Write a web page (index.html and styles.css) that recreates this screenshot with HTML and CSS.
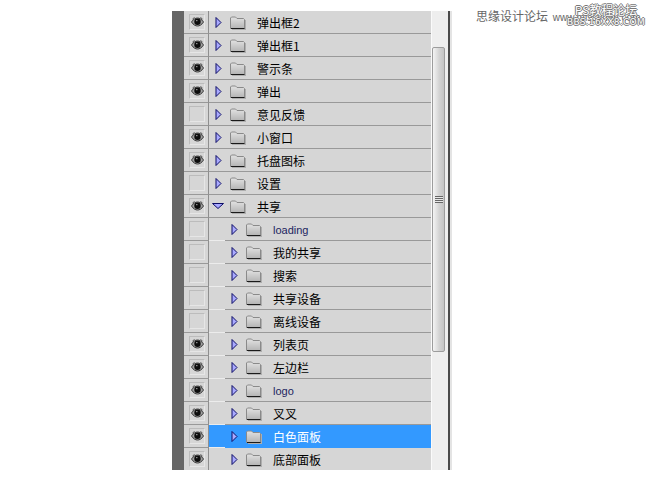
FILE: index.html
```html
<!DOCTYPE html>
<html>
    <head>
        <meta charset="utf-8">
        <title>图层面板</title>
        <link rel="stylesheet" href="styles.css">
    </head>
    <body>
        <svg class="defs" width="0" height="0">
            <defs>
                <linearGradient id="foldergrad" x1="0" y1="0" x2="0" y2="1">
                    <stop offset="0" stop-color="#e2e2e2"/>
                    <stop offset="1" stop-color="#b4b4b4"/>
                </linearGradient>
                <symbol id="eye" viewBox="0 0 13 10">
                    <path d="M.5 5 C2.500 2 4.500 1 6.500 1 C8.500 1 10.500 2 12.500 5 C10.500 8 8.500 9 6.500 9 C4.500 9 2.500 8 .5 5 Z" fill="#a2a2a2" stroke="#3a3a3a" stroke-width="1"/>
                    <circle cx="6.500" cy="4.800" r="3.200" fill="#0c0c0c"/>
                    <rect x="5" y="3" width="1.500" height="1.200" fill="#8c8c8c"/>
                    <path d="M1.500 2 L3.500 .5 M9.500 .5 L11.500 2" stroke="#4c4c4c" stroke-width="1"/>
                </symbol>
                <symbol id="arrow" viewBox="0 0 7 11">
                    <path d="M1 .5 L6 5.500 L1 10.500 Z" fill="#aaaaff" stroke="#0c0c66" stroke-width="1"/>
                </symbol>
                <symbol id="arrowdown" viewBox="0 0 12 6">
                    <path d="M.5 .5 L11.500 .5 L6 5.500 Z" fill="#aaaaff" stroke="#0c0c66" stroke-width="1"/>
                </symbol>
                <symbol id="folder" viewBox="0 0 16 14">
                    <path d="M15 4 H16 V14 H2 V13 H15 Z" fill="#aeaeae"/>
                    <path d="M.5 12.500 V2 L1.500 1 H5.500 L7 2.500 H13.500 L14.500 3.500 V12.500 Z" fill="url(#foldergrad)" stroke="#8a8a8a" stroke-width="1"/>
                    <path d="M1 12.500 H14.500" stroke="#1a1a1a" stroke-width="1"/>
                </symbol>
            </defs>
        </svg>

        <div class="watermark">
            <span class="wm-site">思缘设计论坛 <span class="wm-url">www.missyuan.com</span></span>
            <div class="wm-stamp">
                <span>PS教程论坛</span>
                <span class="wm-bbs">BBS.16XX8.COM</span>
            </div>
        </div>

        <div class="panel">
            <div class="strip"></div>
            <div class="layers">
                <div class="row">
                    <div class="eye"><span class="box"><svg class="i-eye"><use href="#eye"/></svg></span></div>
                    <div class="cell"><svg class="i-arrow"><use href="#arrow"/></svg><svg class="i-folder"><use href="#folder"/></svg><span class="name">弹出框2</span></div>
                </div>
                <div class="row">
                    <div class="eye"><span class="box"><svg class="i-eye"><use href="#eye"/></svg></span></div>
                    <div class="cell"><svg class="i-arrow"><use href="#arrow"/></svg><svg class="i-folder"><use href="#folder"/></svg><span class="name">弹出框1</span></div>
                </div>
                <div class="row">
                    <div class="eye"><span class="box"><svg class="i-eye"><use href="#eye"/></svg></span></div>
                    <div class="cell"><svg class="i-arrow"><use href="#arrow"/></svg><svg class="i-folder"><use href="#folder"/></svg><span class="name">警示条</span></div>
                </div>
                <div class="row">
                    <div class="eye"><span class="box"><svg class="i-eye"><use href="#eye"/></svg></span></div>
                    <div class="cell"><svg class="i-arrow"><use href="#arrow"/></svg><svg class="i-folder"><use href="#folder"/></svg><span class="name">弹出</span></div>
                </div>
                <div class="row">
                    <div class="eye"><span class="box"></span></div>
                    <div class="cell"><svg class="i-arrow"><use href="#arrow"/></svg><svg class="i-folder"><use href="#folder"/></svg><span class="name">意见反馈</span></div>
                </div>
                <div class="row">
                    <div class="eye"><span class="box"><svg class="i-eye"><use href="#eye"/></svg></span></div>
                    <div class="cell"><svg class="i-arrow"><use href="#arrow"/></svg><svg class="i-folder"><use href="#folder"/></svg><span class="name">小窗口</span></div>
                </div>
                <div class="row">
                    <div class="eye"><span class="box"><svg class="i-eye"><use href="#eye"/></svg></span></div>
                    <div class="cell"><svg class="i-arrow"><use href="#arrow"/></svg><svg class="i-folder"><use href="#folder"/></svg><span class="name">托盘图标</span></div>
                </div>
                <div class="row">
                    <div class="eye"><span class="box"></span></div>
                    <div class="cell"><svg class="i-arrow"><use href="#arrow"/></svg><svg class="i-folder"><use href="#folder"/></svg><span class="name">设置</span></div>
                </div>
                <div class="row">
                    <div class="eye"><span class="box"><svg class="i-eye"><use href="#eye"/></svg></span></div>
                    <div class="cell open"><svg class="i-down"><use href="#arrowdown"/></svg><svg class="i-folder"><use href="#folder"/></svg><span class="name">共享</span></div>
                </div>
                <div class="row child">
                    <div class="eye"><span class="box"></span></div>
                    <div class="indent"></div>
                    <div class="cell"><svg class="i-arrow"><use href="#arrow"/></svg><svg class="i-folder"><use href="#folder"/></svg><span class="name latin">loading</span></div>
                </div>
                <div class="row child">
                    <div class="eye"><span class="box"></span></div>
                    <div class="indent"></div>
                    <div class="cell"><svg class="i-arrow"><use href="#arrow"/></svg><svg class="i-folder"><use href="#folder"/></svg><span class="name">我的共享</span></div>
                </div>
                <div class="row child">
                    <div class="eye"><span class="box"></span></div>
                    <div class="indent"></div>
                    <div class="cell"><svg class="i-arrow"><use href="#arrow"/></svg><svg class="i-folder"><use href="#folder"/></svg><span class="name">搜索</span></div>
                </div>
                <div class="row child">
                    <div class="eye"><span class="box"></span></div>
                    <div class="indent"></div>
                    <div class="cell"><svg class="i-arrow"><use href="#arrow"/></svg><svg class="i-folder"><use href="#folder"/></svg><span class="name">共享设备</span></div>
                </div>
                <div class="row child">
                    <div class="eye"><span class="box"></span></div>
                    <div class="indent"></div>
                    <div class="cell"><svg class="i-arrow"><use href="#arrow"/></svg><svg class="i-folder"><use href="#folder"/></svg><span class="name">离线设备</span></div>
                </div>
                <div class="row child">
                    <div class="eye"><span class="box"><svg class="i-eye"><use href="#eye"/></svg></span></div>
                    <div class="indent"></div>
                    <div class="cell"><svg class="i-arrow"><use href="#arrow"/></svg><svg class="i-folder"><use href="#folder"/></svg><span class="name">列表页</span></div>
                </div>
                <div class="row child">
                    <div class="eye"><span class="box"><svg class="i-eye"><use href="#eye"/></svg></span></div>
                    <div class="indent"></div>
                    <div class="cell"><svg class="i-arrow"><use href="#arrow"/></svg><svg class="i-folder"><use href="#folder"/></svg><span class="name">左边栏</span></div>
                </div>
                <div class="row child">
                    <div class="eye"><span class="box"><svg class="i-eye"><use href="#eye"/></svg></span></div>
                    <div class="indent"></div>
                    <div class="cell"><svg class="i-arrow"><use href="#arrow"/></svg><svg class="i-folder"><use href="#folder"/></svg><span class="name latin">logo</span></div>
                </div>
                <div class="row child">
                    <div class="eye"><span class="box"><svg class="i-eye"><use href="#eye"/></svg></span></div>
                    <div class="indent"></div>
                    <div class="cell"><svg class="i-arrow"><use href="#arrow"/></svg><svg class="i-folder"><use href="#folder"/></svg><span class="name">叉叉</span></div>
                </div>
                <div class="row child selected">
                    <div class="eye"><span class="box"><svg class="i-eye"><use href="#eye"/></svg></span></div>
                    <div class="indent"></div>
                    <div class="cell"><svg class="i-arrow"><use href="#arrow"/></svg><svg class="i-folder"><use href="#folder"/></svg><span class="name">白色面板</span></div>
                </div>
                <div class="row child">
                    <div class="eye"><span class="box"><svg class="i-eye"><use href="#eye"/></svg></span></div>
                    <div class="indent"></div>
                    <div class="cell"><svg class="i-arrow"><use href="#arrow"/></svg><svg class="i-folder"><use href="#folder"/></svg><span class="name">底部面板</span></div>
                </div>
            </div>
            <div class="scrollbar">
                <div class="thumb">
                    <div class="grip"></div>
                </div>
            </div>
            <div class="edge"></div>
        </div>
    </body>
</html>
```

FILE: styles.css
```css
* {
  box-sizing: border-box;
}
body {
  margin: 0;
  background-color: #fff;
  font-family: "Noto Sans CJK SC", "Liberation Sans", sans-serif;
  font-size: 12px;
  color: #000;
}
.defs {
  position: absolute;
}

/* watermark lies over the page corner */
.watermark {
  position: absolute;
  top: 0;
  left: 476px;
  width: 174px;
  height: 30px;
  overflow: hidden;
}
.wm-site {
  position: absolute;
  top: 9px;
  left: 0;
  color: #666;
  line-height: 14px;
  white-space: nowrap;
}
.wm-url {
  margin-left: 2px;
  font-family: "Liberation Sans", sans-serif;
  font-size: 10px;
}
.wm-stamp {
  position: absolute;
  top: 4px;
  left: 90px;
  width: 80px;
  color: #fff;
  line-height: 12px;
  text-align: center;
  text-shadow: 1px 0 0 #777, -1px 0 0 #777, 0 1px 0 #777, 0 -1px 0 #777;
}
.wm-stamp span {
  display: block;
  white-space: nowrap;
}
.wm-stamp .wm-bbs {
  font-family: "DejaVu Sans", sans-serif;
  font-size: 9px;
  letter-spacing: 0.3px;
}

.panel {
  display: flex;
  width: 280px;
  height: 459px;
  margin: 11px 0 0 172px;
  overflow: hidden;
  background-color: #d6d6d6;
}
.strip {
  flex: none;
  width: 12px;
  background-color: #666;
}
.layers {
  flex: none;
  width: 247px;
}
.row {
  display: flex;
  height: 23px;
}
.eye {
  flex: none;
  display: flex;
  justify-content: flex-end;
  align-items: center;
  width: 25px;
  padding-right: 3px;
  border-right: 1px solid #8e8e8e;
  border-bottom: 1px solid #999;
}
.box {
  display: flex;
  justify-content: center;
  align-items: center;
  width: 16px;
  height: 16px;
  border: 1px solid #bcbcbc;
  border-right-color: #e6e6e6;
  border-bottom-color: #e6e6e6;
}
.i-eye {
  width: 13px;
  height: 10px;
}
.indent {
  flex: none;
  width: 16px;
  border-bottom: 1px solid #ececec;
}
.cell {
  flex: 1;
  display: flex;
  align-items: center;
  padding-left: 6px;
  border-bottom: 1px solid #999;
}
.cell.open {
  padding-left: 3px;
}
.i-arrow {
  flex: none;
  width: 7px;
  height: 11px;
}
.i-down {
  flex: none;
  width: 12px;
  height: 6px;
  margin-right: 6px;
}
.i-folder {
  flex: none;
  width: 16px;
  height: 14px;
  margin-top: 2px;
  margin-left: 8px;
}
.cell.open .i-folder {
  margin-left: 0;
}
.name {
  margin-top: 2px;
  margin-left: 11px;
  line-height: 14px;
  white-space: nowrap;
}
.latin {
  font-family: "Liberation Sans", sans-serif;
  font-size: 11px;
  color: #1c2460;
}
.selected .cell,
.selected .indent {
  background-color: #3399ff;
  color: #fff;
}
.selected .cell {
  border-bottom-color: #3399ff;
}

.scrollbar {
  flex: none;
  width: 17px;
  padding: 36px 3px 0 0;
  background-color: #eee;
  border-left: 1px solid #fafafa;
}
.thumb {
  display: flex;
  justify-content: center;
  align-items: center;
  height: 305px;
  background-image: linear-gradient(to right, #f4f4f4, #d4d4d4 55%, #c4c4c4);
  border: 1px solid #9c9c9c;
  border-radius: 2px;
}
.grip {
  width: 8px;
  height: 7px;
  background-image: repeating-linear-gradient(to bottom, #666 0, #666 1px, #e8e8e8 1px, #e8e8e8 2px);
}
.edge {
  flex: 1;
  background-color: #e4e4e4;
  border-left: 2px solid #4a4a4a;
}
```
